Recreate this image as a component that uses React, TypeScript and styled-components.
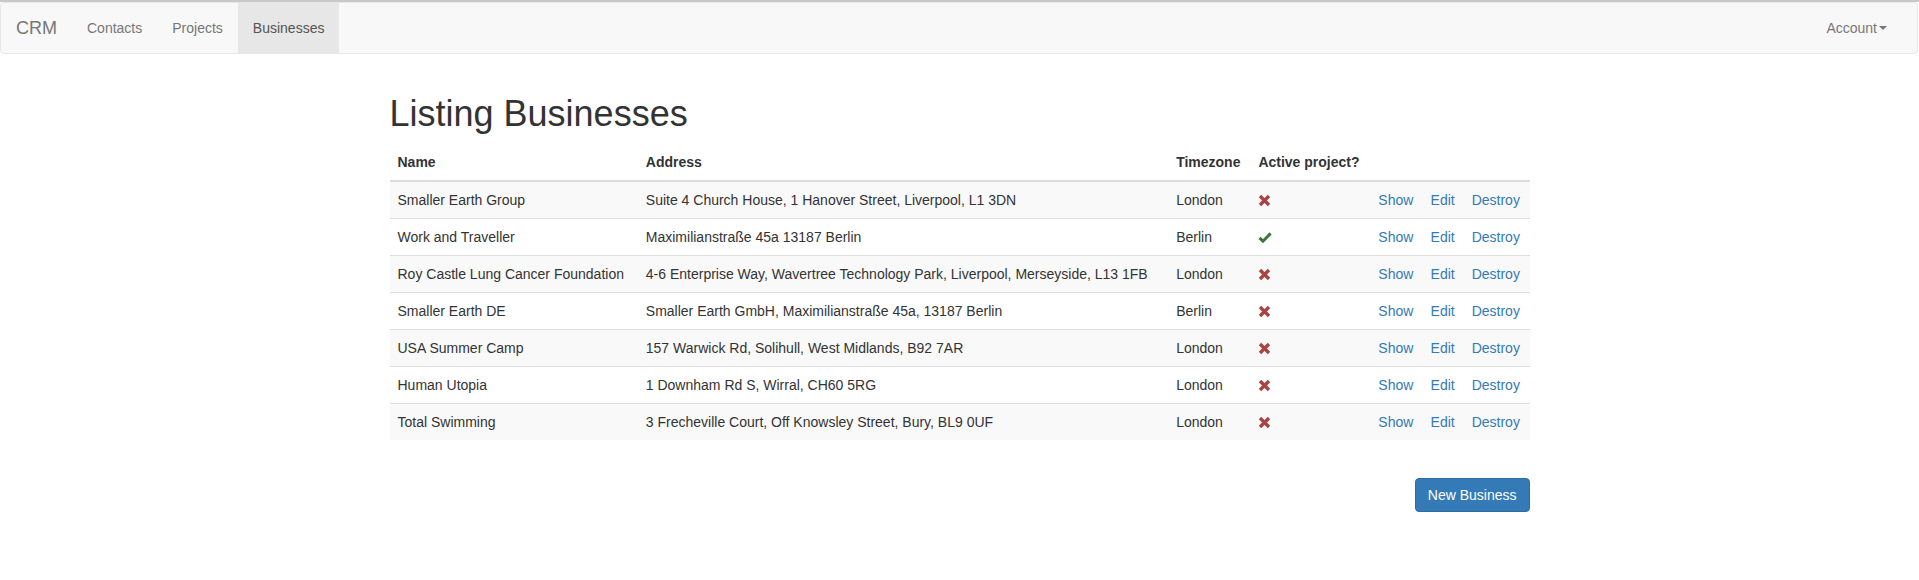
import React from "react";
import styled, { createGlobalStyle } from "styled-components";

const GlobalStyle = createGlobalStyle`
  html, body { margin: 0; padding: 0; background: #fff; }
  body {
    font-family: "Liberation Sans", Arial, Helvetica, sans-serif;
    font-size: 14px;
    line-height: 1.42857143;
    color: #333;
    border-top: 2px solid #c8c8c8;
  }
  * { box-sizing: border-box; }
`;

const Navbar = styled.nav`
  display: flex;
  align-items: stretch;
  justify-content: space-between;
  height: 52px;
  margin: 0 1px 20px 0;
  background: #f8f8f8;
  border: 1px solid #e7e7e7;
  border-radius: 4px;
`;

const NavGroup = styled.div`
  display: flex;
  align-items: stretch;
  padding-right: ${(p: { $right?: boolean }) => (p.$right ? "15px" : "0")};
`;

const Brand = styled.a`
  display: flex;
  align-items: center;
  padding: 0 15px;
  font-size: 18px;
  line-height: 20px;
  color: #777;
  text-decoration: none;
`;

const NavLink = styled.a<{ $active?: boolean }>`
  display: flex;
  align-items: center;
  padding: 0 15px;
  color: ${(p) => (p.$active ? "#555" : "#777")};
  background: ${(p) => (p.$active ? "#e7e7e7" : "transparent")};
  text-decoration: none;
  line-height: 20px;
`;

const Caret = styled.span`
  display: inline-block;
  width: 0;
  height: 0;
  margin-left: 2px;
  vertical-align: middle;
  border-top: 4px solid #777;
  border-right: 4px solid transparent;
  border-left: 4px solid transparent;
`;

const Container = styled.main`
  display: flow-root;
  width: 1170px;
  margin: 0 auto;
  padding: 0 15px;
`;

const Title = styled.h1`
  margin: 20px 0 10px;
  font-size: 36px;
  font-weight: 500;
  line-height: 1.1;
  color: #333;
`;

const Table = styled.table`
  width: 100%;
  margin-bottom: 20px;
  border-collapse: collapse;
  border-spacing: 0;
`;

const Th = styled.th`
  padding: 8px;
  text-align: left;
  font-weight: bold;
  line-height: 20px;
  vertical-align: bottom;
  border-bottom: 2px solid #ddd;
  white-space: nowrap;
`;

const Row = styled.tr<{ $odd: boolean }>`
  background: ${(p) => (p.$odd ? "#f9f9f9" : "#fff")};
`;

const Td = styled.td`
  padding: 8px;
  line-height: 20px;
  vertical-align: top;
  border-top: 1px solid #ddd;
  white-space: nowrap;
`;

const Link = styled.a`
  color: #337ab7;
  text-decoration: none;
`;

const IconWrap = styled.span`
  display: inline-block;
  position: relative;
  top: 2px;
  height: 14px;
`;

const Actions = styled.div`
  display: flex;
  justify-content: flex-end;
  padding-top: 18px;
`;

const Button = styled.a`
  display: inline-block;
  padding: 6px 12px;
  font-size: 14px;
  line-height: 20px;
  color: #fff;
  background: #337ab7;
  border: 1px solid #2e6da4;
  border-radius: 4px;
  text-decoration: none;
`;

const RemoveIcon = () => (
  <svg width="13" height="13" viewBox="0 0 13 13">
    <path d="M2 2 L11 11 M11 2 L2 11" stroke="#a94442" strokeWidth="3.4" strokeLinecap="butt" />
  </svg>
);

const OkIcon = () => (
  <svg width="14" height="13" viewBox="0 0 14 13">
    <path d="M1.5 6.8 L5 10.2 L12.6 2.4" stroke="#3c763d" strokeWidth="3" fill="none" />
  </svg>
);

const businesses = [
  { name: "Smaller Earth Group", address: "Suite 4 Church House, 1 Hanover Street, Liverpool, L1 3DN", tz: "London", active: false },
  { name: "Work and Traveller", address: "Maximilianstraße 45a 13187 Berlin", tz: "Berlin", active: true },
  { name: "Roy Castle Lung Cancer Foundation", address: "4-6 Enterprise Way, Wavertree Technology Park, Liverpool, Merseyside, L13 1FB", tz: "London", active: false },
  { name: "Smaller Earth DE", address: "Smaller Earth GmbH, Maximilianstraße 45a, 13187 Berlin", tz: "Berlin", active: false },
  { name: "USA Summer Camp", address: "157 Warwick Rd, Solihull, West Midlands, B92 7AR", tz: "London", active: false },
  { name: "Human Utopia", address: "1 Downham Rd S, Wirral, CH60 5RG", tz: "London", active: false },
  { name: "Total Swimming", address: "3 Frecheville Court, Off Knowsley Street, Bury, BL9 0UF", tz: "London", active: false },
];

export default function App() {
  return (
    <>
      <GlobalStyle />
      <Navbar>
        <NavGroup>
          <Brand href="#">CRM</Brand>
          <NavLink href="#">Contacts</NavLink>
          <NavLink href="#">Projects</NavLink>
          <NavLink href="#" $active>Businesses</NavLink>
        </NavGroup>
        <NavGroup $right>
          <NavLink href="#">
            Account<Caret />
          </NavLink>
        </NavGroup>
      </Navbar>
      <Container>
        <Title>Listing Businesses</Title>
        <Table>
          <thead>
            <tr>
              <Th>Name</Th>
              <Th>Address</Th>
              <Th>Timezone</Th>
              <Th>Active project?</Th>
              <Th colSpan={3}></Th>
            </tr>
          </thead>
          <tbody>
            {businesses.map((b, i) => (
              <Row key={b.name} $odd={i % 2 === 0}>
                <Td>{b.name}</Td>
                <Td>{b.address}</Td>
                <Td>{b.tz}</Td>
                <Td>
                  <IconWrap>{b.active ? <OkIcon /> : <RemoveIcon />}</IconWrap>
                </Td>
                <Td><Link href="#">Show</Link></Td>
                <Td><Link href="#">Edit</Link></Td>
                <Td><Link href="#">Destroy</Link></Td>
              </Row>
            ))}
          </tbody>
        </Table>
        <Actions>
          <Button href="#">New Business</Button>
        </Actions>
      </Container>
    </>
  );
}
